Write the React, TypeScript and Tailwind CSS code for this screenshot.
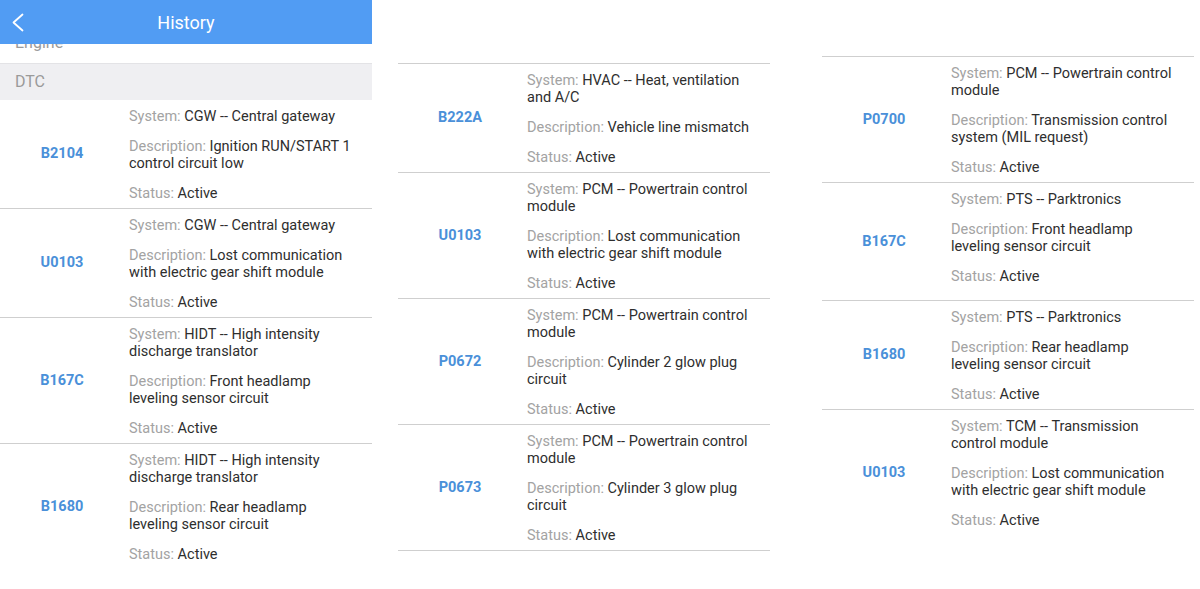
type Dtc = {
  code: string;
  system: string;
  description: string;
  extra?: boolean;
  border?: boolean;
};

const colOne: Dtc[] = [
  { code: "B2104", system: "CGW -- Central gateway", description: "Ignition RUN/START 1 control circuit low", border: true },
  { code: "U0103", system: "CGW -- Central gateway", description: "Lost communication with electric gear shift module", border: true },
  { code: "B167C", system: "HIDT -- High intensity discharge translator", description: "Front headlamp leveling sensor circuit", border: true },
  { code: "B1680", system: "HIDT -- High intensity discharge translator", description: "Rear headlamp leveling sensor circuit" },
];

const colTwo: Dtc[] = [
  { code: "B222A", system: "HVAC -- Heat, ventilation and A/C", description: "Vehicle line mismatch", border: true },
  { code: "U0103", system: "PCM -- Powertrain control module", description: "Lost communication with electric gear shift module", border: true },
  { code: "P0672", system: "PCM -- Powertrain control module", description: "Cylinder 2 glow plug circuit", border: true },
  { code: "P0673", system: "PCM -- Powertrain control module", description: "Cylinder 3 glow plug circuit", border: true },
];

const colThree: Dtc[] = [
  { code: "P0700", system: "PCM -- Powertrain control module", description: "Transmission control system (MIL request)", border: true },
  { code: "B167C", system: "PTS -- Parktronics", description: "Front headlamp leveling sensor circuit", border: true, extra: true },
  { code: "B1680", system: "PTS -- Parktronics", description: "Rear headlamp leveling sensor circuit", border: true },
  { code: "U0103", system: "TCM -- Transmission control module", description: "Lost communication with electric gear shift module" },
];

function Field({ label, value }: { label: string; value: string }) {
  return (
    <p className="leading-[17px]">
      <span className="text-[#a3a3a3]">{label}:</span>{" "}
      <span className="text-[#2e2e2e]">{value}</span>
    </p>
  );
}

function DtcRow({ item }: { item: Dtc }) {
  return (
    <div className={`flex ${item.border ? "border-b border-[#cfcfcf]" : ""}`}>
      <div className="w-[124px] flex items-center justify-center font-bold text-[#4a90d9] text-[14.5px]">
        {item.code}
      </div>
      <div className={`ml-[5px] w-[228px] pt-2 ${item.extra ? "pb-[15px]" : "pb-[6px]"} flex flex-col gap-[13px] text-[14.5px]`}>
        <Field label="System" value={item.system} />
        <Field label="Description" value={item.description} />
        <Field label="Status" value="Active" />
      </div>
    </div>
  );
}

export default function App() {
  return (
    <div className="w-[1200px] h-[589px] bg-white flex overflow-hidden font-['Roboto','Liberation_Sans',sans-serif]">
      {/* Left phone: header + DTC list */}
      <div className="w-[372px] flex flex-col">
        <div className="h-[44px] bg-[#519cf3] flex items-center relative z-10">
          <svg width="34" height="44" viewBox="0 0 34 44" className="shrink-0">
            <path d="M22.5 14.5 L13.5 22.5 L22.5 30.5" stroke="white" strokeWidth="1.8" fill="none" strokeLinecap="round" strokeLinejoin="round" />
          </svg>
          <span className="flex-1 text-center text-white text-[18px] -ml-[34px]">History</span>
        </div>
        <div className="h-[20px] overflow-hidden border-b border-[#e3e3e6]">
          <div className="-mt-[11px] ml-[15px] text-[16px] text-[#9a9a9a] leading-[20px]">Engine</div>
        </div>
        <div className="h-[36px] bg-[#efeff2] flex items-center px-[15px] text-[16px] text-[#9a9a9a]">DTC</div>
        {colOne.map((d, i) => (
          <DtcRow key={i} item={d} />
        ))}
      </div>

      {/* Middle phone */}
      <div className="w-[372px] ml-[26px] pt-[63px]">
        <div className="border-t border-[#cfcfcf]">
          {colTwo.map((d, i) => (
            <DtcRow key={i} item={d} />
          ))}
        </div>
      </div>

      {/* Right phone */}
      <div className="w-[372px] ml-[52px] pt-[56px]">
        <div className="border-t border-[#cfcfcf]">
          {colThree.map((d, i) => (
            <DtcRow key={i} item={d} />
          ))}
        </div>
      </div>
    </div>
  );
}
